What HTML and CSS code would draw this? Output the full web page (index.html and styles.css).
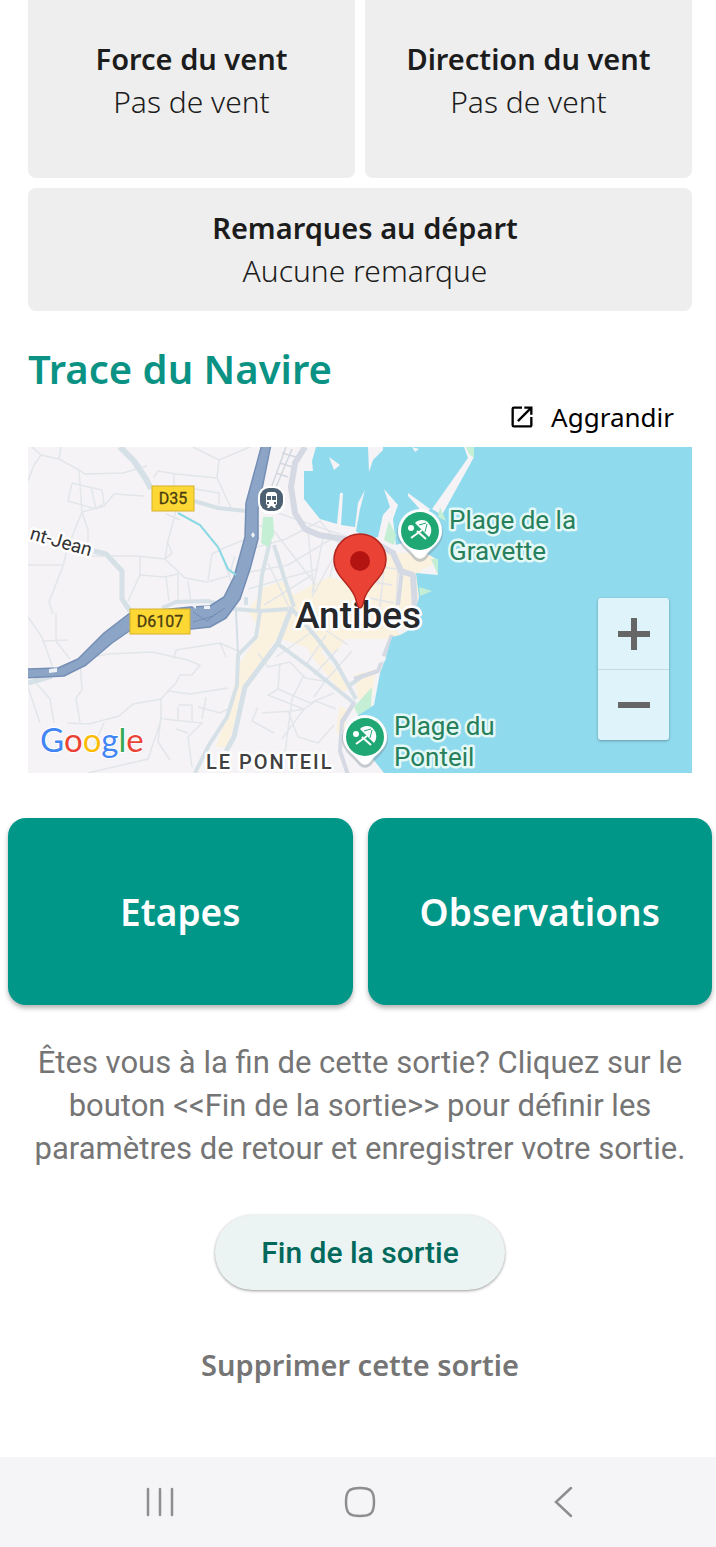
FILE: index.html
```html
<!DOCTYPE html>
<html lang="fr">

<head>
  <title>Sortie en mer</title>
  <meta charset="utf-8">
  <meta name="viewport" content="width=device-width, initial-scale=1">
  <link rel="stylesheet" href="styles.css">
</head>

<body>
  <main>
    <section class="cards">
      <div class="card tall">
        <h3>Force du vent</h3>
        <p>Pas de vent</p>
      </div>
      <div class="card tall">
        <h3>Direction du vent</h3>
        <p>Pas de vent</p>
      </div>
      <div class="card wide">
        <h3>Remarques au départ</h3>
        <p>Aucune remarque</p>
      </div>
    </section>

    <section class="trace">
      <h2>Trace du Navire</h2>
      <button type="button" class="enlarge">
        <svg width="28" height="28" viewBox="0 0 24 24" aria-hidden="true">
          <path d="M19 19H5V5h7V3H5a2 2 0 0 0-2 2v14a2 2 0 0 0 2 2h14c1.100 0 2-.9 2-2v-7h-2v7zM14 3v2h3.590l-9.830 9.830 1.410 1.410L19 6.410V10h2V3h-7z"/>
        </svg>
        Aggrandir
      </button>

      <div class="map">
        <svg class="tiles" viewBox="0 0 664 326" role="img" aria-label="Carte d'Antibes">
          <rect width="664" height="326" fill="#f5f3f5"/>

          <!-- quartiers -->
          <g fill="#faf1df">
            <path d="M236 140l20-6 10 14 18-10 18-8 14 4 20-26 30-6 18 22 4 50-20 18-50 0-10 14-30-6-44-14-14-22z"/>
            <path d="M230 162l30 4-6 18-26 38-14 18-10 46-6 14-10 0 12-38 12-46 20-30z"/>
            <path d="M270 180l40-4 6 18-14 8-10 2 30 36-8 6-30-36z"/>
            <path d="M326 228l22-6-4 28-14 2zM312 258l8 6-6 34-6-16z"/>
            <path d="M366 106l38 0 4 10-16 8-2 32-10 20-14-26z"/>
          </g>

          <!-- rues -->
          <g fill="none" stroke="#e2e6ea" stroke-width="1.500">
            <path d="M0 34l6-16 7-10L4 0M13 8l18 4 20 11 6 4 38-1 24-7M51 23l3 42-15 37-4 17-14 36 4 12M31 12l2-12M44 36l30 7 2 13-8 6-28-8 4-18M63 40l5 22M54 65l6 18v12M54 65l22-6 10-12 30 2"/>
            <path d="M126 30l4-6 18 3 41 4 2-18 38-16M191 13L165 0M189 31l15 32M146 26v14M167 42l24 4v12M148 64l-8 30-3 18M152 73l-14-6M139 94l5 12-7 6 20 19 22 4 22-6 6-20M137 112l-28-3-50 0M112 110v18l-12 26M112 128l24 2 14-3v26M138 130l3 24M160 134l3 22M180 133l4-26 12-6 20-8M192 103l12 34"/>
            <path d="M0 118h34M0 170l14 20 12 34M28 166v28l14 18M14 194l26-1M50 213l30-6 44-2 36 8 12 5-8 10h-12l-4 8-8 8 22 3 38-6M52 213l2 30-6 8 4 24M8 236l14 16 4 24M0 240l12 36M148 203l44-7 18 8M192 196l6 14M146 212l2-9M142 242l-9 10-28 5-14 12-30 8-22-1M133 252v18l-3 25 12 18M136 272l38 4-14 14 4 30M148 282l12 4M178 250l-4 22M150 258h14v16M170 260l22 6 12-6M150 260v14M76 276l-10 22M60 326l60-14 14-42"/>
            <path d="M224 54l26 12 70 24 4 24M218 74l28 10 42 54M214 104l44-12 34-18 20 24-28 52M240 116l22 46M250 106l14 50M216 126l44-8 50-30M220 142l70-20M236 158l48-30M280 84l6 62M296 86l-12 60M312 90l-10 40"/>
            <path d="M230 206l10 14 22-5 15 16 24 4M252 216l-2 26-10 6 36 14-22 30M234 266l30-2 12-2 12-8 20 8M276 228l-12 24-8 62M250 242l32 14 24-10M230 260l-6 14 22 12M260 264l10 26 20 6 16-18M298 188l-20 30M310 202l-24 26M324 204l-30 34M290 178l30 20M300 230l-14 20M248 210l40-28"/>
          </g>
          <g fill="none" stroke="#e1e4ea" stroke-width="1.500">
            <path d="M350 138l2-18 18 2-2 40M340 134l24 4M336 150l30 6M356 120l-4 40M338 160l28 8"/>
            <path d="M258 0l-16 44M264 2l-16 38M254 6l14 4M252 16l12 4M248 26l12 4" stroke="#d3d8e0"/>
            <path d="M208 164l2 44-1 30" stroke="#d3dee6" stroke-width="2"/>
          </g>

          <!-- routes -->
          <g fill="none" stroke="#d6e0e7" stroke-linejoin="round">
            <path stroke-width="6" d="M92 0l14 14 12 18 5 10"/>
            <path stroke-width="5" d="M66 104l12 3 16 17v28l8 12"/>
            <path stroke-width="4" d="M166 54l24 7 28 3"/>
            <path stroke-width="4" d="M134 161l14-6 32-1 28 8 24 2 28-2"/>
            <path stroke-width="5" d="M0 236l24-7"/>
            <path stroke-width="4" d="M232 164l-4 26-18 18-1 30-10 32-18 28-14 28"/>
            <path stroke-width="5" d="M264 160l-14 36-33 44-11 50-8 14"/>
            <path stroke-width="4" d="M246 98l10 32 10 30M242 94l-8 34-4 36M218 150v8"/>
            <path stroke-width="4" d="M250 197l30 22 46 37-12 20M264 162l24 28 20 26 20 36M322 238l14-10"/>
          </g>
          <g fill="none" stroke="#d4d9e3" stroke-linejoin="round">
            <path stroke-width="6" d="M277 0l-10 16-4 24 4 26 10 16 14 6 60 10 14 8 8 18 12 4 2 34"/>
            <path stroke-width="4" d="M374 122l-4 36M364 188l-14 36-24 8M326 256l-12 18-2 30 8 24"/>
          </g>
          <path fill="#8ca5c7" stroke="#748eb5" stroke-width="1.500" stroke-linejoin="round" d="M234-3L218 56L217 90L206 130L196 150L182 159L163 160L102 166L76 186L50 212L30 221L-3 222V231L36 229L58 218L84 196L110 178L163 182L182 180L198 171L212 152L222 122L230 92V62L243-3z"/>
          <path fill="none" stroke="#748eb5" d="M165 165l14 9 10-8M165 175l20-6 12-8"/>
          <path fill="#eef1f5" d="M164 159l4-3v6zM176 159h6v3h-6zM21 222l8-1v4l-8 1zM223 88l2-3 2 3-2 3z"/>
          <path fill="none" stroke="#89d9e5" stroke-width="2" d="M150 66l22 12 18 22 10 22 8 6"/>
          <path fill="#c5efd5" d="M235 70h10l1 18-6 12-7-4z"/>

          <!-- mer -->
          <path fill="#90daee" d="M288 0L284 14L285 24H276V52L292 72L309 77L312 46H315L313 78L327 80L330 56L337 43L332 62L328 84L338 92L350 90L355 68L362 60L356 42L370 58L365 72L368 98L380 94L398 106L408 112L410 128L388 126L391 150L388 162L394 176L372 188L364 190L357 213L352 226L346 258L330 268V290L345 312L356 326H664V0z"/>
          <path fill="#f5f3f5" d="M301 10l11 8-6 5zM340 0l1 25 4-12 10-10V0zM380 46l22 16-4 7-18-20zM436 0h8l2 10-32 58-10-6 36-51zM384 0l7 2-4 3zM352 208l6 2-1 4-6 2zM366 182h12l-6 5z"/>
          <path fill="#c5efd5" d="M438 0h8v11l-5-4zM412 60l6 14-8-4zM403 112l7 16v-16zM391 140l13 4-12 5zM344 240l-1 20-13 8-4-8zM361 74l7 14-2 10-10-5z"/>

          <!-- gare -->
          <g>
            <rect x="230" y="39" width="27" height="28" rx="11" fill="#fff"/>
            <rect x="232" y="41" width="23" height="23" rx="9" fill="#4c6072"/>
            <path fill="#fff" fill-rule="evenodd" d="M240 45h7l2 2v10l-2 2 1 2h-2l-2-2h-1l-2 2h-2l1-2-2-2V47zM239 49v4h4v-4zM244 49v4h4v-4zM239 55v2h2v-2zM246 55v2h2v-2z"/>
          </g>

          <!-- panneaux -->
          <g class="badge">
            <rect x="124" y="39" width="42" height="25"/>
            <text x="145" y="57">D35</text>
            <rect x="102" y="162" width="60" height="25"/>
            <text x="132" y="180">D6107</text>
          </g>

          <!-- plages -->
          <defs>
            <g id="beach">
              <path fill="#7d8f99" opacity=".4" d="M-23 1a23 23 0 0 1 46 0c0 12-11 18-16 25-4 5-10 5-14 0-5-7-16-13-16-25z"/>
              <path fill="#fff" d="M-22-1a22 22 0 0 1 44 0c0 12-11 17-16 24-4 5-8 5-12 0-5-7-16-12-16-24z"/>
              <circle r="19" cy="-1" fill="#1fa774"/>
              <circle r="3" cx="-9" cy="-4" fill="#fff"/>
              <path fill="#fff" d="M-5-9C0-14 7-12 9-8 12-5 12 1 9 5z"/>
              <path fill="none" stroke="#fff" stroke-width="2" d="M2-2L-9 6M-3-1l9 8"/>
              <path fill="none" stroke="#1fa774" d="M-1-7l7-2M5 0l2-8"/>
            </g>
          </defs>
          <use href="#beach" x="392" y="85"/>
          <use href="#beach" x="337" y="291"/>

          <g class="label">
            <text class="green" x="421" y="82">Plage de la</text>
            <text class="green" x="421" y="113">Gravette</text>
            <text class="green" x="366" y="288">Plage du</text>
            <text class="green" x="366" y="319">Ponteil</text>
            <text class="street" transform="translate(1 92) rotate(16)">nt-Jean</text>
            <text class="area" x="178" y="322">LE PONTEIL</text>
            <text class="city" x="330" y="181">Antibes</text>
          </g>

          <!-- position du navire -->
          <path fill="#ea4335" stroke="#b3261e" stroke-width="1.500" d="M332 161c-2 0-3-3-4-8-3-15-22-23-22-40a26 26 0 0 1 52 0c0 17-19 25-22 40-1 5-2 8-4 8z"/>
          <circle cx="332" cy="114" r="10" fill="#b31412"/>

          <text class="google" x="12" y="305"><tspan fill="#4285f4">G</tspan><tspan fill="#ea4335">o</tspan><tspan fill="#fbbc05">o</tspan><tspan fill="#4285f4">g</tspan><tspan fill="#34a853">l</tspan><tspan fill="#ea4335">e</tspan></text>
        </svg>
        <div class="zoom">
          <button type="button" aria-label="Zoom avant">
            <svg width="34" height="34" viewBox="0 0 34 34"><path d="M17 1v32M1 17h32"/></svg>
          </button>
          <button type="button" aria-label="Zoom arrière">
            <svg width="34" height="34" viewBox="0 0 34 34"><path d="M1 17h32"/></svg>
          </button>
        </div>
      </div>
    </section>

    <section class="actions">
      <button type="button">Etapes</button>
      <button type="button">Observations</button>
    </section>

    <section class="end">
      <p>Êtes vous à la fin de cette sortie? Cliquez sur le bouton &lt;&lt;Fin de la sortie&gt;&gt; pour définir les paramètres de retour et enregistrer votre sortie.</p>
      <button type="button" class="finish">Fin de la sortie</button>
      <button type="button" class="delete">Supprimer cette sortie</button>
    </section>
  </main>

  <nav class="navbar">
    <button type="button" aria-label="Applications récentes">
      <svg width="32" height="32" viewBox="0 0 32 32"><path d="M4 3v26M16 3v26M28 3v26"/></svg>
    </button>
    <button type="button" aria-label="Accueil">
      <svg width="32" height="32" viewBox="0 0 32 32"><path d="M16 2c11 0 14 3 14 14s-3 14-14 14S2 27 2 16 5 2 16 2z"/></svg>
    </button>
    <button type="button" aria-label="Retour">
      <svg width="32" height="32" viewBox="0 0 32 32"><path d="M27 2L12 16l15 14"/></svg>
    </button>
  </nav>
</body>

</html>
```
FILE: styles.css
```css
* {
  margin: 0;
  padding: 0;
  box-sizing: border-box;
}

body {
  display: flex;
  flex-direction: column;
  min-height: 100vh;
  background: #fff;
  font-family: "Noto Sans", sans-serif;
  color: #1c1c1c;
}

button {
  border: 0;
  background: none;
  font-family: inherit;
  color: inherit;
  cursor: pointer;
}

main {
  flex: 1;
}

/* cartes */

.cards {
  display: grid;
  grid-template-columns: 1fr 1fr;
  gap: 10px;
  padding: 0 24px 0 28px;
}

.card {
  background: #eee;
  border-radius: 8px;
  font-size: 30px;
  line-height: 43px;
  text-align: center;
}

.card h3 {
  font-size: 29px;
  font-weight: 600;
}

.card p {
  font-weight: 300;
}

.tall {
  padding: 37px 0 55px;
  border-radius: 0 0 8px 8px;
}

.wide {
  grid-column: 1 / 3;
  padding: 18px 0 19px 10px;
}

/* trace */

.trace {
  display: flex;
  flex-direction: column;
  padding: 32px 24px 0 28px;
}

.trace h2 {
  font-size: 40px;
  font-weight: 600;
  line-height: 52px;
  color: #0a9384;
}

.enlarge {
  display: flex;
  align-items: center;
  align-self: flex-end;
  gap: 15px;
  height: 44px;
  padding-right: 18px;
  font-size: 26px;
  color: #000;
}

.map {
  position: relative;
  margin-top: 8px;
}

.tiles {
  display: block;
  width: 100%;
  font-family: Roboto, sans-serif;
}

.badge rect {
  fill: #fdd835;
  stroke: #d5b02c;
}

.badge text {
  font-size: 16px;
  text-anchor: middle;
  fill: #4a3d10;
  stroke: #4a3d10;
  stroke-width: 0.300;
}

.label text {
  paint-order: stroke;
  stroke: #fff;
  stroke-width: 5;
  stroke-linejoin: round;
}

.label .green {
  font-size: 26px;
  fill: #26805b;
  stroke: #e4f8f6;
}

.label .street {
  font-size: 19px;
  fill: #333;
}

.label .area {
  font-size: 20px;
  font-weight: 500;
  letter-spacing: 2px;
  fill: #404040;
}

.label .city {
  font-size: 37px;
  font-weight: 500;
  text-anchor: middle;
  fill: #26282c;
}

.google {
  font-family: Lato, sans-serif;
  font-size: 33px;
  paint-order: stroke;
  stroke: #fff;
  stroke-width: 2;
}

.zoom {
  position: absolute;
  right: 23px;
  bottom: 33px;
  width: 71px;
  border-radius: 3px;
  background: #dff3fa;
  box-shadow: 0 1px 3px rgba(0, 0, 0, .3);
}

.zoom button {
  display: block;
  width: 100%;
  height: 71px;
}

.zoom button + button {
  border-top: 1px solid #c4dbe3;
}

.zoom svg {
  display: block;
  margin: auto;
  stroke: #666;
  stroke-width: 6;
}

/* actions */

.actions {
  display: grid;
  grid-template-columns: 1fr 1fr;
  gap: 15px;
  padding: 45px 4px 0 8px;
}

.actions button {
  height: 187px;
  border-radius: 18px;
  background: #009688;
  box-shadow: 0 3px 5px rgba(0, 0, 0, .3);
  font-size: 37px;
  font-weight: 600;
  color: #fff;
}

.end {
  display: flex;
  flex-direction: column;
  align-items: center;
  padding: 36px 24px 0 28px;
  font-family: Roboto, sans-serif;
}

.end p {
  font-size: 31px;
  line-height: 43px;
  text-align: center;
  color: #757575;
}

.finish {
  height: 75px;
  margin-top: 45px;
  padding: 0 46px;
  border-radius: 38px;
  background: #ebf4f2;
  box-shadow: 0 1px 3px rgba(0, 0, 0, .4);
  font-size: 30px;
  font-weight: 500;
  color: #00695c;
}

.delete {
  height: 60px;
  margin: 44px 0 62px;
  font-family: "Noto Sans", sans-serif;
  font-size: 29px;
  font-weight: 600;
  color: #757575;
}

/* barre systeme */

.navbar {
  display: flex;
  justify-content: space-around;
  padding: 0 56px 0 60px;
  background: #f5f5f7;
}

.navbar button {
  width: 90px;
  height: 90px;
}

.navbar svg {
  display: block;
  margin: auto;
  fill: none;
  stroke: #8e8e8e;
  stroke-width: 2.500;
  stroke-linecap: round;
}
```
